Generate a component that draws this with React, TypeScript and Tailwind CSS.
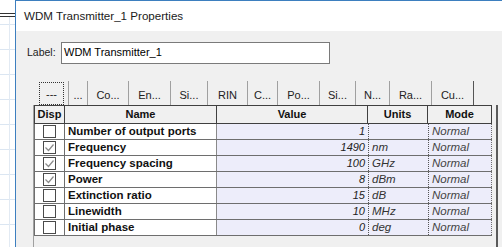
import React from 'react';

interface Param {
  name: string;
  value: string;
  units: string;
  checked: boolean;
}

const params: Param[] = [
  { name: 'Number of output ports', value: '1', units: '', checked: false },
  { name: 'Frequency', value: '1490', units: 'nm', checked: true },
  { name: 'Frequency spacing', value: '100', units: 'GHz', checked: true },
  { name: 'Power', value: '8', units: 'dBm', checked: true },
  { name: 'Extinction ratio', value: '15', units: 'dB', checked: false },
  { name: 'Linewidth', value: '10', units: 'MHz', checked: false },
  { name: 'Initial phase', value: '0', units: 'deg', checked: false },
];

const tabs = [
  { label: '---', w: 'w-[33px]' },
  { label: '...', w: 'w-[19px]' },
  { label: 'Co...', w: 'w-[41px]' },
  { label: 'En...', w: 'w-[42px]' },
  { label: 'Si...', w: 'w-[37px]' },
  { label: 'RIN', w: 'w-[40px]' },
  { label: 'C...', w: 'w-[30px]' },
  { label: 'Po...', w: 'w-[42px]' },
  { label: 'Si...', w: 'w-[36px]' },
  { label: 'N...', w: 'w-[34px]' },
  { label: 'Ra...', w: 'w-[42px]' },
  { label: 'Cu...', w: 'w-[43px]' },
];

function CheckBox({ checked }: { checked: boolean }) {
  return (
    <div className="w-[13px] h-[13px] border border-[#4a4a4a] bg-white flex items-center justify-center">
      {checked && (
        <svg width="11" height="11" viewBox="0 0 11 11">
          <polyline points="1.5,5.5 4.5,8.5 9.5,2.5" fill="none" stroke="#8a8a8a" strokeWidth="1.2" />
        </svg>
      )}
    </div>
  );
}

export default function App() {
  return (
    <div className="w-[502px] h-[247px] flex overflow-hidden bg-white font-['Liberation_Sans',Arial,sans-serif] text-black">
      {/* canvas strip behind the dialog */}
      <div className="w-[15px] shrink-0 flex flex-col bg-white bg-[repeating-linear-gradient(to_bottom,transparent_0px,transparent_24px,#dbe6f2_24px,#dbe6f2_25px)]">
        <div className="h-[13px]" />
        <div className="h-[4px] border-t border-b border-[#333] bg-white" />
        <div className="flex-1 border-l-[3px] border-l-transparent">
          <div className="w-px h-full bg-[#e2eaf3] ml-[6px]" />
        </div>
      </div>
      <div className="w-px shrink-0 bg-[#3d7fbf]" />

      {/* dialog */}
      <div className="flex-1 flex flex-col bg-[#f0f0f0]">
        {/* Title bar */}
        <div className="h-[31px] shrink-0 bg-white border-t border-[#3d7fbf] flex items-center pl-[8px] text-[11.6px] text-[#1a1a1a]">
          WDM Transmitter_1 Properties
        </div>

        {/* Label */}
        <div className="mt-[11px] h-[22px] flex items-center">
          <span className="ml-[11px] w-[34px] text-[10.5px] text-[#222]">Label:</span>
          <div className="w-[269px] h-[22px] border border-[#7a7a7a] bg-white flex items-center pl-[2px] pb-[2px] text-[11px] text-black">
            WDM Transmitter_1
          </div>
        </div>

        {/* Tabs */}
        <div className="mt-[17px] ml-[19px] h-[24px] flex items-stretch text-[11px] text-[#222]">
          {tabs.map((t, i) => (
            <div
              key={i}
              className={`${t.w} shrink-0 flex items-center justify-center ${
                i === 0 ? 'pt-[1px]' : 'border-l border-[#a0a0a0] pt-[4px]'
              } ${i === tabs.length - 1 ? 'border-r border-r-[#555]' : ''}`}
            >
              {i === 0 ? (
                <div className="w-[25px] h-[23px] border border-dotted border-[#333] flex items-center justify-center pt-[2px]">
                  {t.label}
                </div>
              ) : (
                t.label
              )}
            </div>
          ))}
        </div>

        {/* Grid panel */}
        <div className="flex-1 ml-[17px] mr-[4px] border-l border-[#a0a0a0] border-r-2 border-r-[#5a5a5a] flex flex-col">
          <div className="w-[458px] text-[11.5px]">
            {/* header */}
            <div className="flex h-[19px] font-bold text-[11px] text-[#111]">
              <div className="w-[31px] flex items-center justify-center border border-[#404040] bg-[#f0f0f0]">Disp</div>
              <div className="w-[152px] flex items-center justify-center border-y border-r border-[#404040] bg-[#f0f0f0]">Name</div>
              <div className="w-[151px] flex items-center justify-center border-y border-r border-[#404040] bg-[#f0f0f0]">Value</div>
              <div className="w-[60px] flex items-center justify-center border-y border-r border-[#404040] bg-[#f0f0f0]">Units</div>
              <div className="w-[64px] flex items-center justify-center border-y border-r border-[#404040] bg-[#f0f0f0]">Mode</div>
            </div>
            {/* rows */}
            {params.map((p) => (
              <div key={p.name} className="flex h-[16px] border-b border-[#6e6e6e]">
                <div className="w-[31px] flex items-center justify-center bg-white border-l border-r border-[#6e6e6e]">
                  <CheckBox checked={p.checked} />
                </div>
                <div className="w-[152px] flex items-center pl-[3px] bg-white font-bold text-[#111] border-r border-[#8a8a8a]">
                  {p.name}
                </div>
                <div className="w-[151px] flex items-center justify-end pr-[3px] bg-[#ededfa] italic text-[11px] text-[#222]">
                  {p.value}
                </div>
                <div className="w-[60px] flex items-center pl-[3px] bg-[#ededfa] italic text-[#333] border-l border-dotted border-[#555]">
                  {p.units}
                </div>
                <div className="w-[64px] flex items-center pl-[3px] bg-[#ededfa] italic text-[#444] border-l border-dotted border-[#555] border-r border-r-[#6e6e6e]">
                  Normal
                </div>
              </div>
            ))}
          </div>
        </div>
      </div>
    </div>
  );
}
